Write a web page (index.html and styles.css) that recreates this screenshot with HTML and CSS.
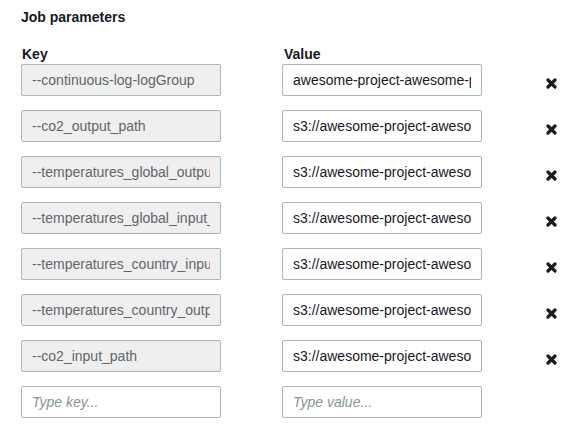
FILE: index.html
```html
<!DOCTYPE html>
<html>
<head>
<meta charset="utf-8">
<link rel="stylesheet" href="styles.css">
</head>
<body>
<div class="panel">
  <div class="title">Job parameters</div>
  <div class="head-row">
    <div class="col-label">Key</div>
    <div class="col-label value-label">Value</div>
  </div>
  <div class="rows">
    <div class="row">
      <label class="field key"><input value="--continuous-log-logGroup" disabled></label>
      <label class="field val"><input value="awesome-project-awesome-project-glue-logs"></label>
      <button class="remove" aria-label="Remove"><svg viewBox="0 0 11 11" width="11" height="11"><path d="M2 2 L9 9 M9 2 L2 9" stroke="#1b1b1b" stroke-width="3.2" stroke-linecap="round"/></svg></button>
    </div>
    <div class="row">
      <label class="field key"><input value="--co2_output_path" disabled></label>
      <label class="field val"><input value="s3://awesome-project-awesome-bucket/co2_output"></label>
      <button class="remove" aria-label="Remove"><svg viewBox="0 0 11 11" width="11" height="11"><path d="M2 2 L9 9 M9 2 L2 9" stroke="#1b1b1b" stroke-width="3.2" stroke-linecap="round"/></svg></button>
    </div>
    <div class="row">
      <label class="field key"><input value="--temperatures_global_output_path" disabled></label>
      <label class="field val"><input value="s3://awesome-project-awesome-bucket/temperatures_global_output"></label>
      <button class="remove" aria-label="Remove"><svg viewBox="0 0 11 11" width="11" height="11"><path d="M2 2 L9 9 M9 2 L2 9" stroke="#1b1b1b" stroke-width="3.2" stroke-linecap="round"/></svg></button>
    </div>
    <div class="row">
      <label class="field key"><input value="--temperatures_global_input_path" disabled></label>
      <label class="field val"><input value="s3://awesome-project-awesome-bucket/temperatures_global_input"></label>
      <button class="remove" aria-label="Remove"><svg viewBox="0 0 11 11" width="11" height="11"><path d="M2 2 L9 9 M9 2 L2 9" stroke="#1b1b1b" stroke-width="3.2" stroke-linecap="round"/></svg></button>
    </div>
    <div class="row">
      <label class="field key"><input value="--temperatures_country_input_path" disabled></label>
      <label class="field val"><input value="s3://awesome-project-awesome-bucket/temperatures_country_input"></label>
      <button class="remove" aria-label="Remove"><svg viewBox="0 0 11 11" width="11" height="11"><path d="M2 2 L9 9 M9 2 L2 9" stroke="#1b1b1b" stroke-width="3.2" stroke-linecap="round"/></svg></button>
    </div>
    <div class="row">
      <label class="field key"><input value="--temperatures_country_output_path" disabled></label>
      <label class="field val"><input value="s3://awesome-project-awesome-bucket/temperatures_country_output"></label>
      <button class="remove" aria-label="Remove"><svg viewBox="0 0 11 11" width="11" height="11"><path d="M2 2 L9 9 M9 2 L2 9" stroke="#1b1b1b" stroke-width="3.2" stroke-linecap="round"/></svg></button>
    </div>
    <div class="row">
      <label class="field key"><input value="--co2_input_path" disabled></label>
      <label class="field val"><input value="s3://awesome-project-awesome-bucket/co2_input"></label>
      <button class="remove" aria-label="Remove"><svg viewBox="0 0 11 11" width="11" height="11"><path d="M2 2 L9 9 M9 2 L2 9" stroke="#1b1b1b" stroke-width="3.2" stroke-linecap="round"/></svg></button>
    </div>
    <div class="row">
      <label class="field new"><input placeholder="Type key..."></label>
      <label class="field new"><input placeholder="Type value..."></label>
    </div>
  </div>
</div>
</body>
</html>
```

FILE: styles.css
```css
html, body {
  margin: 0;
  padding: 0;
  background: #ffffff;
}

body {
  font-family: "Liberation Sans", Arial, sans-serif;
  color: #16191f;
}

.panel {
  padding: 7px 0 0 21px;
}

.title {
  font-size: 14px;
  font-weight: bold;
  line-height: 20px;
  color: #16191f;
}

.head-row {
  display: flex;
  margin-top: 17px;
}

.col-label {
  width: 200px;
  font-size: 14px;
  font-weight: bold;
  line-height: 20px;
  padding-left: 1px;
  color: #16191f;
}

.value-label {
  margin-left: 61px;
}

.rows {
  display: flex;
  flex-direction: column;
  gap: 14px;
}

.row {
  display: flex;
  align-items: flex-start;
  gap: 61px;
}

.field {
  box-sizing: border-box;
  display: block;
  width: 200px;
  height: 32px;
  padding: 1px 10px 0;
  border: 1px solid #aab7b8;
  border-radius: 2px;
  background: #ffffff;
  overflow: hidden;
}

.field input {
  display: block;
  box-sizing: border-box;
  width: 178px;
  height: 29px;
  margin: 0;
  padding: 0;
  border: 0;
  background: transparent;
  outline: none;
  overflow: hidden;
  clip-path: inset(0);
  font-family: "Liberation Sans", Arial, sans-serif;
  font-size: 14px;
  line-height: 29px;
  color: #16191f;
}

.field.key {
  background: #efefef;
}

.field.key input {
  color: #5f666d;
  -webkit-text-fill-color: #5f666d;
  opacity: 1;
}

.field.new input::placeholder {
  color: #879596;
  font-style: italic;
}

.remove {
  width: 11px;
  height: 11px;
  margin: 14px 0 0 3px;
  padding: 0;
  border: 0;
  background: transparent;
  display: flex;
}
```
